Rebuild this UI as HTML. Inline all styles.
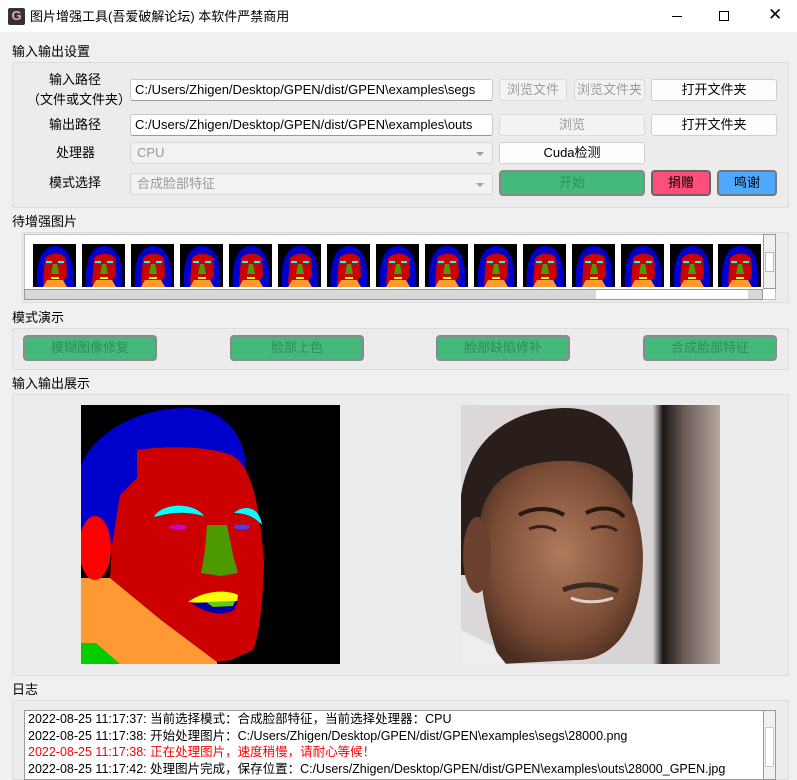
<!DOCTYPE html>
<html><head><meta charset="utf-8"><style>
*{box-sizing:border-box;margin:0;padding:0}
body{width:797px;height:770px;overflow:hidden;background:#f0f0f0;font-family:"Liberation Sans","Noto Sans CJK SC",sans-serif;font-size:13px;color:#000;position:relative}
.a{position:absolute}
.title{left:0;top:0;width:797px;height:32px;background:#fff}
.lbl{font-size:13px;white-space:nowrap;line-height:16px}
.grp{border:1px solid #dcdcdc;background:#ececec;border-radius:2px}
.tb{background:#fff;border:1px solid #c8c8c8;border-bottom:1px solid #999;border-radius:3px;padding-left:4px;line-height:20px;font-size:13px;white-space:nowrap;overflow:hidden}
.cb{background:#f2f2f2;border:1px solid #d6d6d6;border-radius:3px;padding-left:6px;line-height:20px;color:#999;font-size:13px}
.cb:after{content:"";position:absolute;right:8px;top:9px;border-left:4px solid transparent;border-right:4px solid transparent;border-top:4px solid #a0a0a0}
.btn{background:#fdfdfd;border:1px solid #cfcfcf;border-radius:3px;text-align:center;line-height:20px;font-size:13px}
.dis{color:#9c9c9c;background:#f3f3f3;border-color:#dadada}
.g{background:#45b87c;border:2px solid #8a8a8a;border-radius:4px;color:#2d8f5a;text-align:center;font-size:13px}
.log{font-size:12.5px;line-height:16.5px;white-space:nowrap;left:28px}
</style></head><body>
<div class="a title"></div>
<div class="a" style="left:8px;top:8px;width:17px;height:17px;background:#333;border-radius:2px"><div style="color:#f4a3b8;font-weight:bold;font-size:13px;line-height:15px;text-align:center">G</div></div>
<div class="a lbl" style="left:30px;top:9px">图片增强工具(吾爱破解论坛) 本软件严禁商用</div>
<div class="a" style="left:672px;top:16px;width:10px;height:1px;background:#000"></div>
<div class="a" style="left:719px;top:11px;width:10px;height:10px;border:1px solid #000"></div>
<div class="a" style="left:768px;top:6px;font-size:17px;line-height:18px">✕</div>

<div class="a lbl" style="left:12px;top:44px">输入输出设置</div>
<div class="a grp" style="left:12px;top:62px;width:777px;height:146px"></div>
<div class="a lbl" style="left:49px;top:72px">输入路径</div>
<div class="a lbl" style="left:27px;top:92px">（文件或文件夹）</div>
<div class="a tb" style="left:130px;top:79px;width:363px;height:22px">C:/Users/Zhigen/Desktop/GPEN/dist/GPEN\examples\segs</div>
<div class="a btn dis" style="left:499px;top:79px;width:68px;height:22px">浏览文件</div>
<div class="a btn dis" style="left:574px;top:79px;width:71px;height:22px">浏览文件夹</div>
<div class="a btn" style="left:651px;top:79px;width:126px;height:22px">打开文件夹</div>
<div class="a lbl" style="left:49px;top:117px">输出路径</div>
<div class="a tb" style="left:130px;top:114px;width:363px;height:22px">C:/Users/Zhigen/Desktop/GPEN/dist/GPEN\examples\outs</div>
<div class="a btn dis" style="left:499px;top:114px;width:146px;height:22px">浏览</div>
<div class="a btn" style="left:651px;top:114px;width:126px;height:22px">打开文件夹</div>
<div class="a lbl" style="left:56px;top:145px">处理器</div>
<div class="a cb" style="left:130px;top:142px;width:363px;height:22px">CPU</div>
<div class="a btn" style="left:499px;top:142px;width:146px;height:22px">Cuda检测</div>
<div class="a lbl" style="left:49px;top:175px">模式选择</div>
<div class="a cb" style="left:130px;top:173px;width:363px;height:22px">合成脸部特征</div>
<div class="a g" style="left:499px;top:170px;width:146px;height:26px;line-height:22px">开始</div>
<div class="a g" style="left:651px;top:170px;width:60px;height:26px;line-height:22px;background:#fe4f7a;color:#000;border-color:#666">捐赠</div>
<div class="a g" style="left:717px;top:170px;width:60px;height:26px;line-height:22px;background:#4ea8fe;color:#000;border-color:#777">鸣谢</div>

<div class="a lbl" style="left:12px;top:214px">待增强图片</div>
<div class="a grp" style="left:22px;top:232px;width:767px;height:71px"></div>
<div class="a" style="left:24px;top:234px;width:752px;height:66px;background:#fff;border:1px solid #c0c0c0"></div>
<svg class="a" style="left:0;top:0" width="797" height="770">
<defs><g id="th">
<rect width="43" height="43" fill="#000"/>
<path d="M4,43 C2,20 8,2 22,2 C36,2 42,18 40,43Z" fill="#0000cc"/>
<path d="M10,40 L12,14 C18,8 28,8 33,14 L34,32 L28,40Z" fill="#cc0000"/>
<path d="M10,43 L14,36 L30,36 L34,43Z" fill="#ff9933"/>
<path d="M20,20 L24,20 L26,30 L18,30Z" fill="#4c9a00"/>
<rect x="13" y="17" width="6" height="2" fill="#00ffff"/><rect x="25" y="17" width="6" height="2" fill="#00ffff"/>
<rect x="18" y="33" width="8" height="2" fill="#ffff00"/>
</g></defs>
<g transform="translate(33,244)"><use href="#th"/></g>
<g transform="translate(82,244)"><use href="#th"/></g>
<g transform="translate(131,244)"><use href="#th"/></g>
<g transform="translate(180,244)"><use href="#th"/></g>
<g transform="translate(229,244)"><use href="#th"/></g>
<g transform="translate(278,244)"><use href="#th"/></g>
<g transform="translate(327,244)"><use href="#th"/></g>
<g transform="translate(376,244)"><use href="#th"/></g>
<g transform="translate(425,244)"><use href="#th"/></g>
<g transform="translate(474,244)"><use href="#th"/></g>
<g transform="translate(523,244)"><use href="#th"/></g>
<g transform="translate(572,244)"><use href="#th"/></g>
<g transform="translate(621,244)"><use href="#th"/></g>
<g transform="translate(670,244)"><use href="#th"/></g>
<g transform="translate(718,244)"><use href="#th"/></g>
</svg>
<div class="a" style="left:763px;top:234px;width:13px;height:55px;background:#f0f0f0;border:1px solid #999"></div>
<div class="a" style="left:765px;top:252px;width:9px;height:20px;background:#fff;border:1px solid #bbb"></div>
<div class="a" style="left:24px;top:289px;width:739px;height:11px;background:#d8d8d8;border:1px solid #999"></div>
<div class="a" style="left:596px;top:290px;width:152px;height:9px;background:#fff"></div>

<div class="a lbl" style="left:12px;top:310px">模式演示</div>
<div class="a grp" style="left:12px;top:328px;width:777px;height:42px"></div>
<div class="a g" style="left:23px;top:335px;width:134px;height:26px;line-height:22px">模糊图像修复</div>
<div class="a g" style="left:230px;top:335px;width:134px;height:26px;line-height:22px">脸部上色</div>
<div class="a g" style="left:436px;top:335px;width:134px;height:26px;line-height:22px">脸部缺陷修补</div>
<div class="a g" style="left:643px;top:335px;width:134px;height:26px;line-height:22px">合成脸部特征</div>

<div class="a lbl" style="left:12px;top:376px">输入输出展示</div>
<div class="a grp" style="left:12px;top:394px;width:777px;height:282px"></div>
<svg class="a" style="left:81px;top:405px" width="259" height="259" viewBox="0 0 259 259">
<rect width="259" height="259" fill="#000"/>
<path d="M0,60 C15,25 60,3 105,3 C140,3 160,25 165,57 L168,150 L30,150 L0,150Z" fill="#0000cc"/>
<path d="M56,45 C90,40 130,42 150,50 C168,58 178,90 183,157 C182,200 178,230 172,245 L150,255 L136,257 L80,215 L29,173 L31,140 L39,90 L56,73Z" fill="#cc0000"/>
<path d="M10,173 L29,173 L80,215 L136,257 L136,259 L0,259 L0,173Z" fill="#ff9933"/>
<path d="M0,238 L15,238 L39,259 L0,259Z" fill="#00cc00"/>
<ellipse cx="14" cy="143" rx="16" ry="32" fill="#ff0000"/>
<path d="M73,112 C80,98 112,96 123,111 C105,106 90,107 73,112Z" fill="#00ffff"/>
<path d="M153,108 C162,100 178,100 181,120 C172,110 162,108 153,108Z" fill="#00ffff"/>
<ellipse cx="97" cy="122" rx="9" ry="2.5" fill="#cc00cc"/>
<ellipse cx="161" cy="122" rx="8" ry="2.5" fill="#4040ff"/>
<path d="M126,120 L146,120 L152,150 L157,168 L140,171 L120,168 L124,145Z" fill="#4c9a00"/>
<path d="M107,197 C122,186 145,184 157,190 L156,197 L135,199Z" fill="#ffff00"/>
<path d="M110,198 L157,196 L153,205 C140,212 125,208 110,198Z" fill="#0000aa"/>
<path d="M125,197 L154,196 L152,201 L132,202Z" fill="#66cc00"/>
</svg>
<svg class="a" style="left:461px;top:405px" width="259" height="259" viewBox="0 0 259 259">
<defs><radialGradient id="sk" cx="0.5" cy="0.45" r="0.6"><stop offset="0" stop-color="#b07a5c"/><stop offset="0.7" stop-color="#7a4c35"/><stop offset="1" stop-color="#4a2c20"/></radialGradient>
<linearGradient id="bg" x1="0" x2="1"><stop offset="0" stop-color="#ddd8da"/><stop offset="0.74" stop-color="#d8d3d5"/><stop offset="0.78" stop-color="#1a1514"/><stop offset="0.86" stop-color="#6a5a55"/><stop offset="1" stop-color="#b8a8a2"/></linearGradient></defs>
<rect width="259" height="259" fill="url(#bg)"/>
<path d="M0,90 C10,25 60,3 105,3 C145,3 168,30 172,70 L170,140 L10,170 L0,170Z" fill="#2a1e1a"/>
<path d="M20,110 C30,65 70,55 110,56 C160,58 180,100 182,150 C182,210 160,255 115,255 L40,259 C25,220 15,170 20,110Z" fill="url(#sk)"/>
<ellipse cx="16" cy="150" rx="14" ry="38" fill="#6a4030"/>
<path d="M0,225 L30,240 L45,259 L0,259Z" fill="#eee"/>
<path d="M58,110 C72,102 90,102 103,110" stroke="#2a1810" stroke-width="4" fill="none"/>
<path d="M125,108 C138,101 155,102 163,112" stroke="#2a1810" stroke-width="4" fill="none"/>
<path d="M68,124 C78,120 88,121 95,126" stroke="#3a2018" stroke-width="3" fill="none"/>
<path d="M130,124 C140,120 150,121 156,126" stroke="#3a2018" stroke-width="3" fill="none"/>
<path d="M102,185 C118,178 140,178 157,186" stroke="#3a2a25" stroke-width="5" fill="none"/>
<path d="M110,193 C122,198 138,198 152,193" stroke="#e0d0c8" stroke-width="3" fill="none"/>
</svg>

<div class="a lbl" style="left:12px;top:682px">日志</div>
<div class="a grp" style="left:12px;top:700px;width:777px;height:80px"></div>
<div class="a" style="left:24px;top:710px;width:740px;height:70px;background:#fff;border:1px solid #999"></div>
<div class="a" style="left:763px;top:710px;width:13px;height:70px;background:#f0f0f0;border:1px solid #999"></div>
<div class="a" style="left:765px;top:727px;width:9px;height:40px;background:#fff;border:1px solid #ccc"></div>
<div class="a log" style="top:711px">2022-08-25 11:17:37: 当前选择模式：合成脸部特征，当前选择处理器：CPU</div>
<div class="a log" style="top:728px">2022-08-25 11:17:38: 开始处理图片：C:/Users/Zhigen/Desktop/GPEN/dist/GPEN\examples\segs\28000.png</div>
<div class="a log" style="top:744px;color:#f00">2022-08-25 11:17:38: 正在处理图片，速度稍慢，请耐心等候！</div>
<div class="a log" style="top:761px">2022-08-25 11:17:42: 处理图片完成，保存位置：C:/Users/Zhigen/Desktop/GPEN/dist/GPEN\examples\outs\28000_GPEN.jpg</div>
</body></html>
